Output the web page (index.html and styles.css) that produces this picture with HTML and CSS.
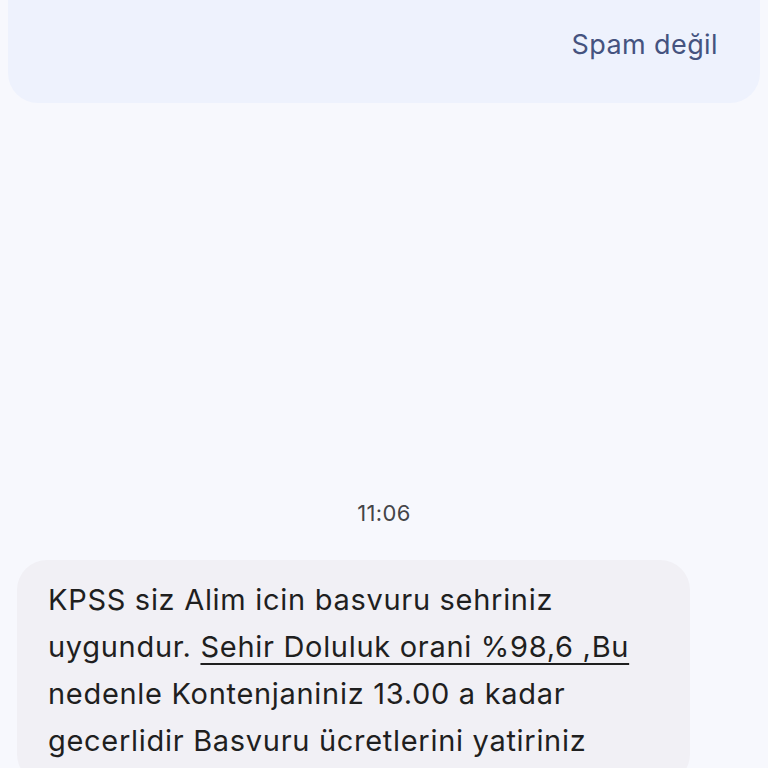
FILE: index.html
```html
<!DOCTYPE html>
<html lang="tr">
<head>
    <meta charset="UTF-8">
    <meta name="viewport" content="width=device-width, initial-scale=1.0">
    <title>Mesajlar</title>
    <link rel="stylesheet" href="styles.css">
</head>
<body>
    <div class="spam-card">
        <button class="spam-button">Spam değil</button>
    </div>

    <div class="thread">
        <p class="timestamp">11:06</p>
        <div class="bubble">
            KPSS siz Alim icin basvuru sehriniz<br>
            uygundur. <span class="link">Sehir Doluluk orani %98,6 ,Bu</span><br>
            nedenle Kontenjaniniz 13.00 a kadar<br>
            gecerlidir Basvuru ücretlerini yatiriniz
        </div>
    </div>
</body>
</html>
```

FILE: styles.css
```css
body {
    margin: 0;
    background: #f7f8fd;
    font-family: Inter, Roboto, sans-serif;
    color: #1f1f1f;
    height: 768px;
    overflow: hidden;
}

.spam-card {
    margin: 0 8px;
    height: 103px;
    background: #eef2fd;
    border-radius: 0 0 30px 30px;
    display: flex;
    justify-content: flex-end;
    align-items: flex-start;
    padding-right: 42px;
}

.spam-button {
    margin-top: 27px;
    padding: 0;
    border: none;
    background: none;
    font-family: Inter, Roboto, sans-serif;
    font-size: 27px;
    letter-spacing: 0.4px;
    color: #45537f;
    line-height: 36px;
}

.thread {
    display: flex;
    flex-direction: column;
}

.timestamp {
    margin: 397px 0 0;
    text-align: center;
    font-size: 22px;
    letter-spacing: 0.3px;
    line-height: 26px;
    color: #454548;
}

.bubble {
    margin: 34px 0 0 17px;
    width: 673px;
    box-sizing: border-box;
    padding: 16px 20px 20px 31px;
    background: #f1f0f5;
    border-radius: 30px;
    font-size: 29px;
    letter-spacing: 0.7px;
    line-height: 47px;
    white-space: nowrap;
}

.link {
    text-decoration: underline;
    text-decoration-thickness: 2px;
    text-underline-offset: 6px;
}
```
